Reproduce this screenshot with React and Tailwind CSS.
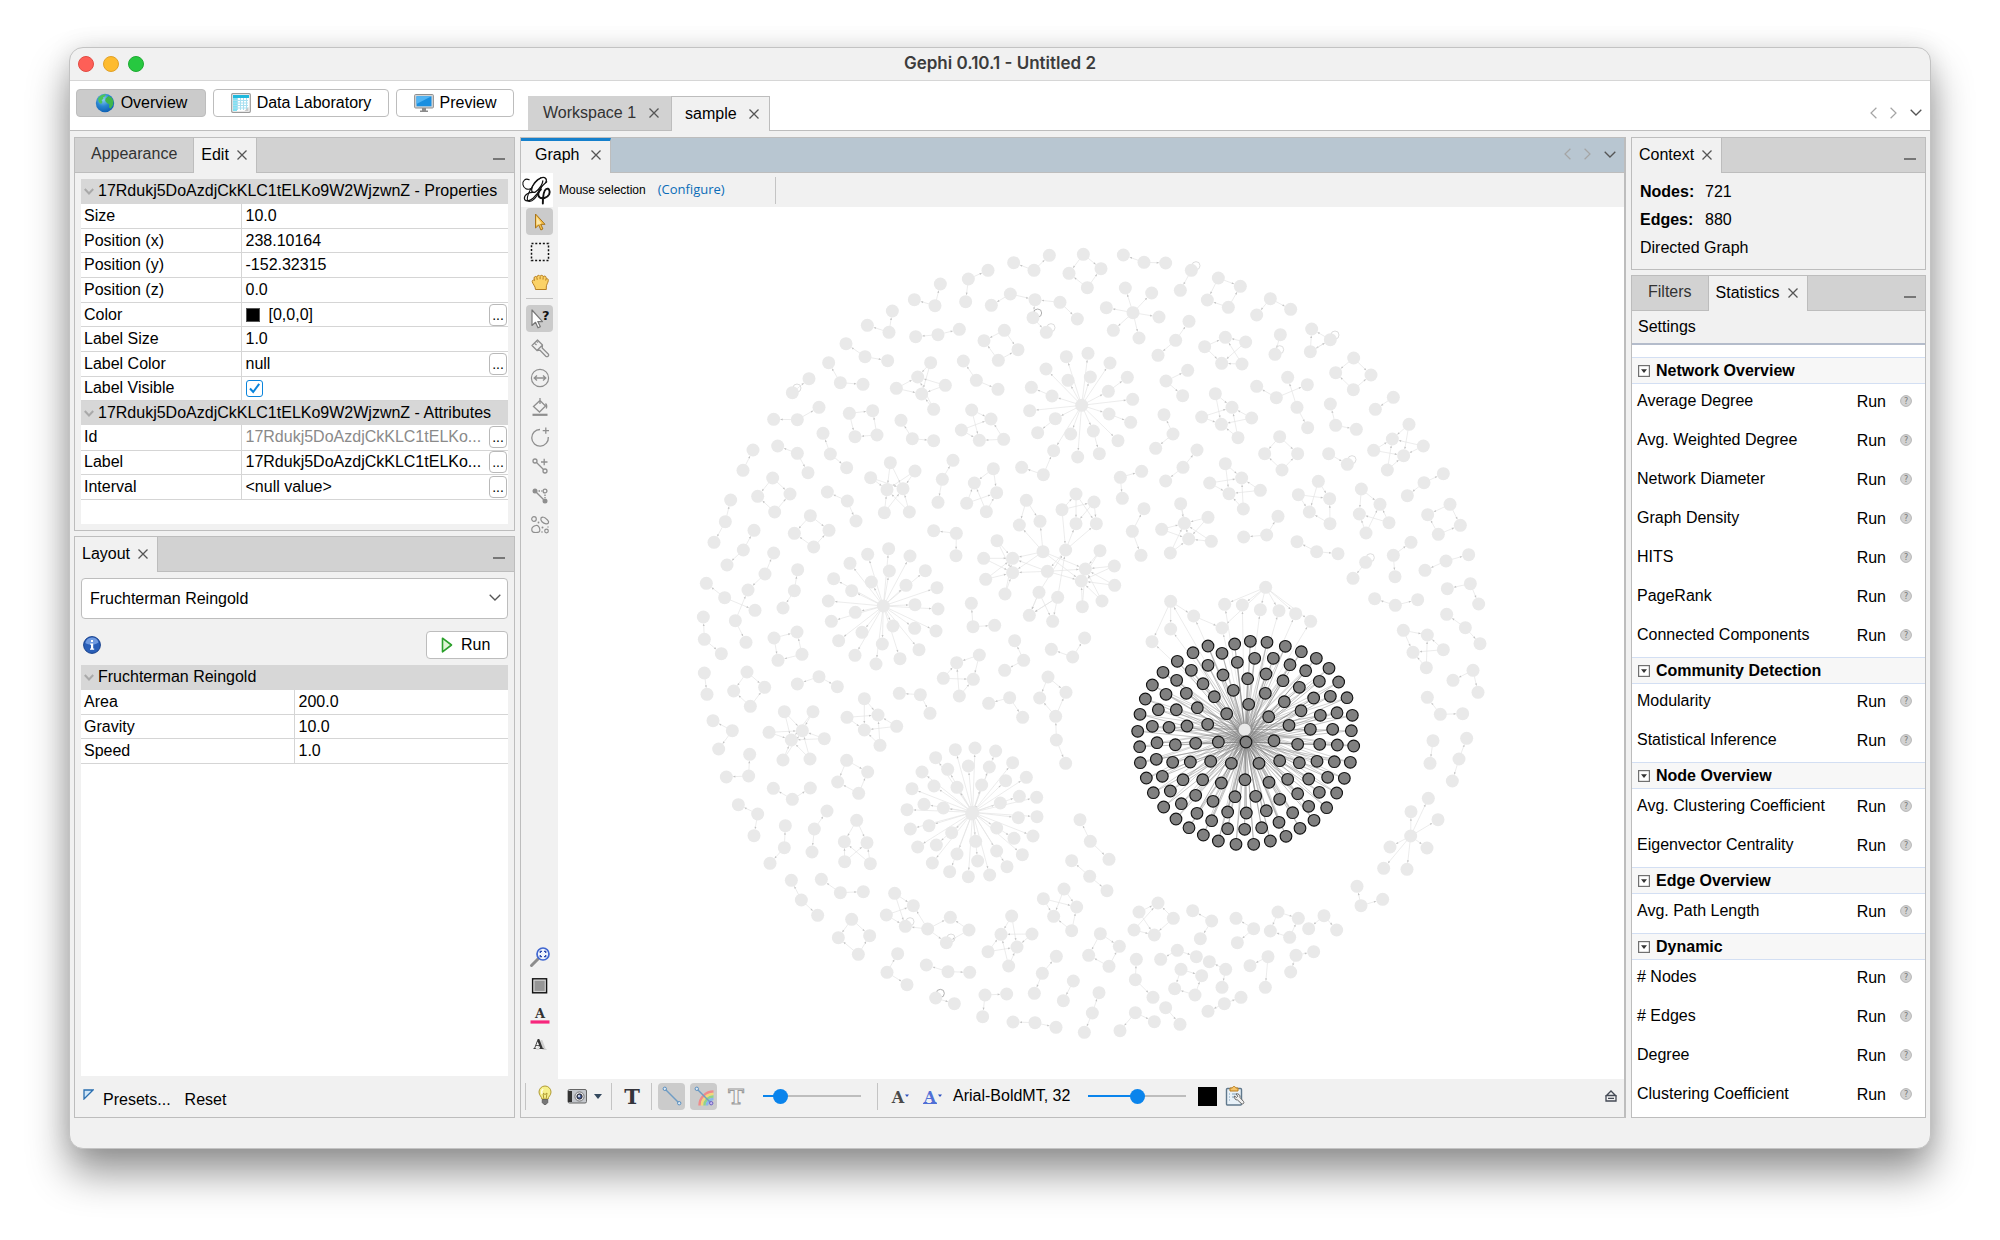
import { useState } from 'react';

/* ---------- graph data (3 units per pixel) ---------- */

// every group is a flat list of coordinates relative to the sector's origin
const sectors = [
  {
    at: [396, 69],
    pairs: [[307, 488, 357, 446], [159, 721, 189, 660]],
    chains: [
      [971, 98, 1032, 121, 1078, 76], [827, 215, 835, 147, 894, 121], [673, 209, 735, 227, 751, 162],
      [532, 286, 597, 307, 607, 243], [468, 341, 525, 380, 593, 392], [677, 320, 744, 314, 808, 298],
      [416, 398, 451, 458, 519, 463], [251, 568, 322, 569, 387, 532], [633, 571, 667, 626, 731, 632],
      [820, 393, 859, 451, 924, 478], [263, 648, 322, 670, 354, 728], [399, 610, 421, 672, 470, 713],
      [122, 810, 106, 875, 72, 937], [192, 901, 160, 960, 111, 1005], [412, 786, 472, 813, 498, 873],
      [789, 691, 757, 748, 744, 817], [731, 902, 799, 910, 798, 977], [49, 1060, 104, 1103, 195, 1141],
      [251, 969, 225, 1032, 174, 1080], [174, 1080, 136, 1172, 168, 1237], [323, 1019, 313, 1082, 279, 1134],
      [40, 1161, 43, 1228, 94, 1271], [844, 1120, 849, 1190, 914, 1186], [974, 1232, 1001, 1291, 944, 1321],
      [1084, 1258, 1148, 1281, 1184, 1224], [995, 712, 1060, 734, 1091, 662], [904, 226, 961, 192, 1035, 209],
      [1035, 209, 1110, 217, 1162, 267], [988, 885, 1009, 811, 1050, 874], [988, 885, 1059, 965, 1050, 874],
      [1018, 1156, 1047, 1087, 1088, 1174], [1018, 1156, 1103, 1102, 1088, 1174], [1127, 960, 1047, 1087, 1018, 1156],
      [1127, 960, 1103, 1102, 1018, 1156],
    ],
    rings: [
      [943, 301, 984, 359, 925, 391, 882, 332], [478, 550, 548, 542, 561, 615, 495, 620],
      [248, 744, 300, 792, 254, 846, 203, 799], [361, 857, 417, 901, 371, 951, 313, 910],
      [252, 1224, 321, 1206, 336, 1273, 264, 1291], [1180, 73, 1233, 116, 1192, 173, 1137, 130],
    ],
    webs: [
      [683, 441, 695, 492, 722, 398, 619, 475, 766, 466, 731, 538],
      [903, 567, 868, 631, 845, 540, 814, 600, 941, 628],
      [591, 779, 639, 776, 601, 698, 675, 723, 542, 743, 583, 848, 658, 846],
      [853, 759, 920, 788, 910, 716, 830, 820, 889, 845],
      [1158, 881, 1219, 881, 1158, 792, 1212, 816, 1127, 960],
      [968, 985, 968, 1028, 921, 932, 881, 985, 887, 1048, 945, 1092, 1059, 965, 1072, 1024],
      [1186, 1017, 1174, 1053, 1230, 962, 1273, 1008, 1274, 1066, 1236, 1113, 1177, 1130, 1059, 965, 1072, 1024],
    ],
    stars: [
      [1175, 526, 1129, 380, 1194, 370, 1068, 417, 1134, 451, 1201, 441, 1260, 399, 1086, 498, 1255, 484, 1019, 542,
        1096, 566, 1257, 552, 1142, 612, 1210, 603, 1163, 681, 1091, 662, 1284, 632, 1328, 508],
      [1086, 498, 1024, 472], [1255, 484, 1312, 442], [1257, 552, 1322, 577], [1096, 566, 1043, 608], [1210, 603, 1228, 671],
      [580, 1128, 533, 973, 596, 956, 660, 978, 480, 1000, 598, 1023, 706, 1022, 431, 1046, 544, 1056, 648, 1066, 741, 1073,
        485, 1082, 415, 1113, 675, 1124, 744, 1137, 496, 1147, 424, 1174, 609, 1188, 674, 1195, 738, 1203, 516, 1207,
        446, 1232, 577, 1242, 687, 1259, 495, 1276, 630, 1286, 558, 1302],
      [1116, 839, 1158, 792, 1212, 816, 1127, 960], [1127, 960, 1072, 1024],
      [1029, 263, 1035, 209, 1069, 307],
    ],
    loops: [[307, 488], [1069, 307]],
    darkLoops: [[1029, 263]],
  },
  {
    at: [1506, 69],
    pairs: [[394, 121, 361, 181], [661, 314, 645, 373], [1000, 502, 946, 538], [806, 671, 862, 703], [917, 997, 879, 1045]],
    chains: [
      [190, 75, 252, 97, 317, 99], [590, 255, 631, 206, 692, 238], [387, 274, 347, 331, 294, 376],
      [383, 421, 318, 453, 368, 497], [590, 469, 649, 503, 742, 464], [683, 442, 711, 532, 743, 593],
      [811, 522, 827, 586, 889, 598], [312, 554, 339, 612, 287, 655], [411, 660, 369, 712, 317, 753],
      [187, 805, 181, 742, 245, 724], [1150, 731, 1092, 758, 1042, 797], [252, 836, 217, 904, 243, 976],
      [551, 921, 620, 915, 654, 859], [711, 935, 770, 965, 834, 971], [1053, 937, 1000, 976, 1005, 1040],
      [1226, 974, 1158, 993, 1095, 1021], [755, 297, 811, 329, 751, 365], [755, 297, 751, 365, 811, 329],
    ],
    rings: [
      [475, 144, 541, 169, 505, 232, 442, 210], [881, 384, 933, 435, 880, 479, 827, 428],
      [659, 620, 713, 671, 666, 720, 614, 671], [1170, 823, 1201, 886, 1135, 913, 1103, 854],
    ],
    webs: [
      [496, 322, 485, 400, 434, 350, 557, 336, 546, 402],
      [516, 532, 484, 583, 466, 491, 425, 561, 575, 564, 534, 623],
      [997, 627, 1031, 677, 1047, 583, 941, 661, 1090, 648, 982, 720],
      [545, 744, 507, 791, 496, 701, 449, 759, 601, 781, 550, 837],
      [809, 806, 748, 846, 775, 754, 715, 794, 810, 881],
      [960, 823, 898, 852, 904, 777, 987, 878, 918, 909],
      [373, 880, 386, 927, 362, 821, 444, 862, 305, 898, 454, 934, 331, 969],
    ],
    stars: [[219, 248, 196, 174, 275, 189, 139, 233, 297, 261, 160, 301, 237, 324]],
    loops: [[394, 121], [645, 373], [811, 329], [862, 703], [917, 997]],
    darkLoops: [],
  },
  {
    at: [396, 1299],
    pairs: [[43, 99, 51, 163], [1150, 1023, 1120, 1082], [737, 1074, 793, 1091], [1427, 1103, 1470, 1153]],
    chains: [
      [322, 132, 387, 110, 442, 140], [69, 242, 127, 272, 86, 327], [179, 343, 176, 408, 109, 411],
      [250, 445, 307, 478, 361, 444], [145, 494, 203, 522, 192, 587], [286, 557, 283, 623, 240, 670],
      [411, 513, 373, 567, 366, 636], [304, 721, 334, 780, 383, 826], [394, 718, 451, 758, 520, 755],
      [628, 160, 691, 164, 720, 220], [896, 190, 959, 173, 998, 232], [1097, 229, 1099, 300, 1127, 370],
      [1170, 539, 1201, 604, 1257, 658], [1145, 662, 1199, 709, 1251, 752], [623, 941, 591, 997, 651, 1034],
      [709, 975, 774, 995, 839, 997], [950, 1062, 885, 1065, 878, 1130], [1099, 949, 1057, 1000, 1033, 1060],
      [969, 1146, 1035, 1148, 1098, 1162], [1227, 1058, 1207, 1119, 1183, 1177],
      [1638, 835, 1691, 866, 1642, 908], [1508, 812, 1565, 843, 1531, 896], [1856, 866, 1902, 827, 1940, 870],
      [2001, 739, 2013, 797, 2078, 778], [1339, 958, 1336, 1019, 1389, 1072], [1412, 958, 1462, 931, 1519, 950],
      [1558, 965, 1607, 988, 1596, 1042], [1680, 977, 1734, 950, 1726, 1042], [1802, 996, 1818, 946, 1871, 935],
      [1290, 1172, 1336, 1118, 1393, 1145], [1554, 1114, 1603, 1091, 1653, 1072],
    ],
    rings: [
      [171, 96, 224, 142, 181, 199, 131, 153], [485, 838, 539, 887, 505, 943, 445, 893],
      [470, 361, 533, 396, 506, 460, 443, 426], [1074, 111, 1128, 157, 1097, 229, 1049, 174],
      [713, 867, 781, 832, 837, 870, 769, 908], [1231, 881, 1288, 919, 1257, 979, 1196, 946],
      [1764, 816, 1825, 835, 1799, 892, 1741, 873], [1473, 988, 1535, 1007, 1515, 1065, 1454, 1046],
    ],
    webs: [
      [337, 272, 304, 300, 283, 215, 369, 215, 237, 277, 403, 296, 279, 360, 360, 357],
      [564, 225, 523, 270, 523, 176, 471, 232, 620, 259, 570, 316],
      [463, 605, 531, 608, 500, 541, 464, 665, 541, 671],
      [800, 68, 850, 118, 868, 45, 760, 115, 808, 168],
      [1160, 801, 1091, 829, 1060, 776, 1122, 747, 1145, 872],
      [670, 797, 646, 859, 614, 760, 589, 825, 713, 867],
      [933, 883, 981, 921, 965, 828, 1026, 882, 894, 935, 956, 978],
      [1404, 789, 1393, 885, 1347, 816, 1450, 835, 1332, 870],
    ],
    stars: [
      [848, 517, 796, 329, 855, 324, 917, 333, 737, 353, 773, 388, 835, 378, 898, 381, 968, 368, 696, 396, 947, 422,
        1009, 412, 732, 438, 801, 442, 875, 435, 666, 446, 931, 489, 988, 469, 1040, 472, 702, 493, 760, 504, 651, 509,
        985, 533, 1041, 530, 661, 567, 717, 557, 920, 564, 785, 578, 857, 604, 972, 595, 1029, 588, 683, 621, 739, 615,
        920, 633, 997, 644, 801, 642, 727, 669, 863, 663, 951, 680, 779, 695, 835, 710, 899, 705, 845, 522],
    ],
    loops: [[646, 859], [769, 908]],
    darkLoops: [[737, 1074]],
  },
  {
    at: [1566, 1089],
    pairs: [[1059, 512, 1050, 580]],
    chains: [
      [1102, 56, 1171, 41, 1196, 102], [884, 86, 946, 106, 1013, 89], [1100, 133, 1156, 173, 1200, 221],
      [1119, 331, 1179, 301, 1194, 367], [1042, 382, 1081, 433, 1148, 431], [1160, 505, 1137, 567, 1117, 633],
    ],
    rings: [],
    webs: [[1042, 195, 999, 247, 970, 181, 1090, 239, 1039, 293]],
    stars: [
      [992, 798, 1045, 685, 993, 725, 1074, 749, 930, 831, 1041, 834, 911, 895, 981, 898],
      [557, 52, 434, 103, 487, 105, 541, 119, 597, 122, 647, 131, 692, 154, 426, 174],
      [272, 94, 341, 138, 216, 215, 272, 177],
      [341, 138, 426, 174],
      [494, 479, 434, 103, 487, 105, 541, 119, 597, 122, 647, 131, 692, 154, 426, 174, 341, 138, 216, 215, 272, 177, 272, 94],
    ],
    loops: [],
    darkLoops: [],
  },
];

// highlighted neighbourhood of the hovered node
const hub = [498, 516];
const selected = [
  511, 214, 561, 217, 616, 229, 664, 245, 709, 265, 747, 295, 776, 336, 801, 383, 817, 436, 814, 482, 821, 528, 811, 577,
  793, 625, 770, 669, 740, 713, 702, 751, 660, 775, 618, 799, 571, 813, 521, 823, 468, 823, 415, 813, 370, 795, 327, 773,
  288, 747, 251, 711, 220, 668, 199, 624, 181, 578, 179, 530, 173, 484, 180, 433, 196, 387, 217, 345, 249, 307, 292, 274,
  339, 248, 384, 228, 464, 222, 426, 250, 472, 277, 524, 265, 580, 265, 630, 284, 677, 302, 718, 334, 751, 379, 771, 428,
  758, 478, 772, 525, 763, 575, 743, 622, 718, 667, 686, 709, 638, 728, 597, 757, 545, 773, 494, 778, 443, 776, 395, 752,
  351, 730, 304, 701, 271, 663, 247, 619, 229, 568, 231, 518, 217, 469, 235, 419, 258, 373, 290, 331, 334, 301, 384, 286,
  429, 315, 503, 326, 558, 312, 609, 332, 658, 352, 701, 384, 721, 436, 691, 478, 719, 523, 711, 574, 686, 627, 653, 671,
  599, 688, 559, 722, 499, 729, 443, 726, 399, 694, 347, 676, 309, 629, 278, 577, 286, 524, 267, 472, 289, 419, 319, 370,
  369, 341, 403, 380, 460, 361, 556, 370, 613, 395, 663, 422, 627, 466, 653, 523, 658, 578, 623, 628, 567, 637, 527, 679,
  465, 680, 424, 639, 368, 629, 331, 576, 347, 520, 321, 468, 352, 413, 440, 431, 506, 403, 566, 440, 582, 512, 599, 572,
  537, 580, 495, 629, 454, 580, 392, 574, 415, 516, 383, 463,
];

const toPoints = (flat) => {
  const out = [];
  for (let i = 0; i < flat.length; i += 2) out.push([flat[i], flat[i + 1]]);
  return out;
};

function buildSector({ pairs, chains, rings, webs, stars }) {
  const nodes = new Map();
  const edges = [];
  const add = (list) => list.forEach((p) => nodes.set(p.join(), p));
  [...pairs, ...stars].forEach((flat) => {
    const [from, ...rest] = toPoints(flat);
    add([from, ...rest]);
    rest.forEach((to) => edges.push([from, to]));
  });
  chains.forEach((flat) => {
    const [a, mid, b] = toPoints(flat);
    add([a, mid, b]);
    edges.push([mid, a], [mid, b]);
  });
  rings.forEach((flat) => {
    const [a, b, c, d] = toPoints(flat);
    add([a, b, c, d]);
    edges.push([a, b], [a, d], [c, b], [c, d]);
  });
  webs.forEach((flat) => {
    const [h1, h2, ...leaves] = toPoints(flat);
    add([h1, h2, ...leaves]);
    leaves.forEach((leaf) => edges.push([leaf, h1], [leaf, h2]));
  });
  return { nodes: [...nodes.values()], edges };
}

function Edge({ from, to }) {
  const dx = to[0] - from[0];
  const dy = to[1] - from[1];
  const len = Math.hypot(dx, dy) || 1;
  const ux = dx / len;
  const uy = dy / len;
  const tx = to[0] - ux * 20;
  const ty = to[1] - uy * 20;
  const bx = tx - ux * 7;
  const by = ty - uy * 7;
  return (
    <>
      <path d={`M${from[0]} ${from[1]}L${tx} ${ty}`} stroke="#e2e2e2" strokeWidth="2" />
      <path d={`M${tx} ${ty}L${bx - uy * 3} ${by + ux * 3}L${bx + uy * 3} ${by - ux * 3}Z`} fill="#c4c4c4" />
    </>
  );
}

function GraphCanvas() {
  const ring = toPoints(selected);
  return (
    <svg viewBox="0 0 3198 2616" className="absolute inset-0 h-full w-full" role="img" aria-label="Graph">
      {sectors.map((sector) => {
        const { nodes, edges } = buildSector(sector);
        return (
          <g key={sector.at.join()} transform={`translate(${sector.at[0]} ${sector.at[1]})`} fill="none">
            {edges.map(([from, to], i) => <Edge key={i} from={from} to={to} />)}
            {sector.loops.map(([x, y]) => <circle key={`${x},${y}`} cx={x + 14} cy={y - 14} r="12" stroke="#dedede" strokeWidth="3" />)}
            {sector.darkLoops.map(([x, y]) => <circle key={`${x},${y}`} cx={x + 14} cy={y - 14} r="12" stroke="#b0b0b0" strokeWidth="3" />)}
            {nodes.map(([x, y]) => <circle key={`${x},${y}`} cx={x} cy={y} r="19.5" fill="#e9e9e9" />)}
          </g>
        );
      })}
      <g transform="translate(1566 1089)">
        {ring.map(([x, y]) => (
          <g key={`${x},${y}`} stroke="#808080" strokeWidth="2">
            <path d={`M${hub[0]} ${hub[1]}L${x} ${y}`} opacity="0.7" />
            <path d={`M494 479L${x} ${y}`} opacity="0.5" />
          </g>
        ))}
        <circle cx="494" cy="479" r="19.5" fill="#e9e9e9" stroke="#8a8a8a" strokeWidth="2" />
        {[...ring, hub].map(([x, y]) => (
          <circle key={`${x},${y}`} cx={x} cy={y} r="17.5" fill="#808080" stroke="#141414" strokeWidth="3.5" />
        ))}
      </g>
    </svg>
  );
}

/* ---------- small icons ---------- */

const CloseIcon = () => (
  <svg viewBox="0 0 10 10" className="size-2.5" fill="none" stroke="#555" strokeWidth="1.3"><path d="M.5.5l9 9M9.5.5l-9 9" /></svg>
);

const ChevronDown = ({ className = 'w-3' }) => (
  <svg viewBox="0 0 12 7" className={className} fill="none" stroke="#555" strokeWidth="1.3"><path d="M.7.7L6 6 11.3.7" /></svg>
);

const ScrollArrows = () => (
  <div className="flex items-center gap-[13px]">
    <button aria-label="Previous tab"><svg viewBox="0 0 7 12" className="w-[7px]" fill="none" stroke="#a5a5a5" strokeWidth="1.2"><path d="M6.4.7L1 6l5.4 5.3" /></svg></button>
    <button aria-label="Next tab"><svg viewBox="0 0 7 12" className="w-[7px]" fill="none" stroke="#a5a5a5" strokeWidth="1.2"><path d="M.6.7L6 6 .6 11.3" /></svg></button>
    <button aria-label="Show tabs"><ChevronDown /></button>
  </div>
);

const GlobeIcon = () => (
  <svg viewBox="0 0 20 20" className="size-5">
    <defs>
      <radialGradient id="sea" cx=".4" cy=".3" r=".75"><stop offset="0" stopColor="#8fd0f5" /><stop offset=".5" stopColor="#2a86d0" /><stop offset="1" stopColor="#0b5cb0" /></radialGradient>
    </defs>
    <circle cx="10" cy="10" r="9.2" fill="url(#sea)" />
    <path d="M3 5.500C5 2 8.500 1 11 1.200l-1 2-2 1.300.5 1.500-2 1 1 2-1.500 2L3.800 9z" fill="#4cc45a" />
    <path d="M10.500 5.500l3-2.500 3 1.500 2 3.500-.5 4-2.200 3.500-1.800-1 .3-3-2.300-1.500-1.800-2z" fill="#3fb64c" />
  </svg>
);

const TableIcon = () => (
  <svg viewBox="0 0 20 20" className="size-5">
    <rect x=".7" y=".7" width="18.600" height="18.600" rx="1" fill="#fff" stroke="#9a9a9a" strokeWidth="1.2" />
    <rect x="2" y="2" width="16" height="3" fill="#1fb8dc" />
    <rect x="2" y="5" width="4" height="13" fill="#7fe0f2" />
    <path d="M2 7.500h15M2 10h15M2 12.500h15M2 15h15M6.500 5v12M9.500 5v12M12.500 5v12M15.500 5v12" stroke="#a9dff0" strokeWidth="1" />
    <path d="M17.500 14v4h-4z" fill="#c9c9c9" />
  </svg>
);

const MonitorIcon = () => (
  <svg viewBox="0 0 20 20" className="size-5">
    <rect x=".6" y="1.500" width="18.800" height="13.500" rx="1" fill="#d6d6d6" stroke="#8f8f8f" />
    <rect x="2.500" y="3.300" width="15" height="10" fill="#1a8fe0" />
    <path d="M2.500 3.300h15L2.500 11z" fill="#52b4f2" />
    <path d="M8 15h4v2.500h2v1.500H6v-1.500h2z" fill="#8b8b8b" />
  </svg>
);

const GephiLogo = () => (
  <svg viewBox="0 0 32 35" className="h-[34px] w-8 bg-white" fill="none" stroke="#111" strokeLinecap="round">
    <path d="M25 10C27 6 24 3.500 20 5 15 7 11 12 10.500 17c-.3 3 2 4 4.500 2 4-3 7-8 7-11" strokeWidth="1.300" />
    <path d="M8 7C4 5 .8 8 1.500 12c.8 4 4.500 6 8.500 4" strokeWidth="1.100" />
    <path d="M20 5c-7 4-14 16-14 22 0 3 4 3 7 0 4-4 6-9 8-13" strokeWidth="1.100" />
    <path d="M13 20C8 19.500 3 22 3 26c0 3.500 5 3.500 9 0 4-3.500 6-7 8-11 1-2 4-4 6-6" strokeWidth="1.200" />
    <path d="M20 17c-3 2-3.500 6-1.500 8 2.500 2 8 1 10-3 1.500-3.500-.5-7-3-5.500-2.500 1.500-3.500 8-3.500 15" strokeWidth="2" />
  </svg>
);

const toolClass = 'flex size-[27px] items-center justify-center rounded';

function Tool({ label, active, children }) {
  return (
    <button aria-label={label} title={label} className={active ? `${toolClass} bg-[#cbcbcb]` : toolClass}>
      <svg viewBox="0 0 20 20" className="size-5 overflow-visible" fill="none">{children}</svg>
    </button>
  );
}

const VSep = () => <div className="h-[27px] w-px shrink-0 bg-[#c4c4c4]" />;

/* ---------- panels ---------- */

function Tab({ title, active, accent }) {
  if (!active) {
    return <button className="border-r border-b border-[#bdbdbd] px-4 pb-0.5 text-[#333]">{title}</button>;
  }
  const base = 'flex items-center border-r border-[#bdbdbd] bg-[#f1f1f1]';
  return (
    <div className={accent ? `${base} gap-3 border-t-3 border-t-[#1580cc] pr-[9px] pb-[5px] pl-[14px]` : `${base} gap-2 pr-[9px] pb-0.5 pl-[7px]`}>
      <button>{title}</button>
      <button aria-label={`Close ${title}`}><CloseIcon /></button>
    </div>
  );
}

function TabBar({ children }) {
  return (
    <div className="flex h-[35px] shrink-0 bg-[#d2d2d2]">
      {children}
      <div className="flex flex-1 items-end justify-end border-b border-[#bdbdbd] pr-[9px] pb-3">
        <button aria-label="Minimize" className="h-0.5 w-3 bg-[#777]" />
      </div>
    </div>
  );
}

const panelClass = 'flex flex-col border border-[#bdbdbd] bg-[#f1f1f1]';

function PropertyHeader({ children }) {
  return (
    <tr className="h-6 bg-[#d7d7d7]">
      <th colSpan={2} className="p-0 text-left font-normal whitespace-nowrap">
        <span className="flex items-center gap-1 pl-[3px]">
          <svg viewBox="0 0 10 7" className="w-2.5" fill="none" stroke="#a9a9a9" strokeWidth="2"><path d="M.8 1L5 5.500 9.200 1" /></svg>
          {children}
        </span>
      </th>
    </tr>
  );
}

function PropertyRow({ name, more, muted, children }) {
  return (
    <tr className="h-6 border-b border-[#d5d5d5]">
      <th scope="row" className="border-r border-[#d5d5d5] p-0 pl-[3px] text-left font-normal whitespace-nowrap">{name}</th>
      <td className="p-0 pl-1">
        <div className="flex items-center justify-between">
          <span className={muted ? 'whitespace-nowrap text-[#8a8a8a]' : 'whitespace-nowrap'}>{children}</span>
          {more && <button aria-label={`Edit ${name}`} className="mr-px h-[22px] w-[18px] shrink-0 rounded border border-[#b9b9b9] bg-white text-sm leading-5">...</button>}
        </div>
      </td>
    </tr>
  );
}

function EditPanel() {
  const [visible, setVisible] = useState(true);
  const id = '17Rdukj5DoAzdjCkKLC1tELKo9W2WjzwnZ';
  const shortId = `${id.slice(0, 25)}...`;
  return (
    <section className={`${panelClass} h-[394px]`}>
      <TabBar>
        <Tab title="Appearance" />
        <Tab title="Edit" active />
      </TabBar>
      <div className="m-1.5 flex-1 bg-white">
        <table className="h-[321px] w-full table-fixed border-collapse leading-5">
          <colgroup><col className="w-[160px]" /><col /></colgroup>
          <tbody>
            <PropertyHeader>{id} - Properties</PropertyHeader>
            <PropertyRow name="Size">10.0</PropertyRow>
            <PropertyRow name="Position (x)">238.10164</PropertyRow>
            <PropertyRow name="Position (y)">-152.32315</PropertyRow>
            <PropertyRow name="Position (z)">0.0</PropertyRow>
            <PropertyRow name="Color" more>
              <span className="flex items-center gap-[9px]"><span className="size-3.5 border border-[#555] bg-black" />[0,0,0]</span>
            </PropertyRow>
            <PropertyRow name="Label Size">1.0</PropertyRow>
            <PropertyRow name="Label Color" more>null</PropertyRow>
            <PropertyRow name="Label Visible">
              <label className="relative block size-[17px]">
                <input
                  type="checkbox"
                  aria-label="Label Visible"
                  checked={visible}
                  onChange={(e) => setVisible(e.target.checked)}
                  className="block size-[17px] appearance-none rounded-[3px] border border-[#0a84dc] bg-white"
                />
                {visible && <svg viewBox="0 0 17 17" className="pointer-events-none absolute inset-0 size-[17px]" fill="none" stroke="#0a84dc" strokeWidth="2"><path d="M4 8.500l3.200 3.500 6-8.200" /></svg>}
              </label>
            </PropertyRow>
            <PropertyHeader>{id} - Attributes</PropertyHeader>
            <PropertyRow name="Id" more muted>{shortId}</PropertyRow>
            <PropertyRow name="Label" more>{shortId}</PropertyRow>
            <PropertyRow name="Interval" more>&lt;null value&gt;</PropertyRow>
          </tbody>
        </table>
      </div>
    </section>
  );
}

function LayoutPanel() {
  return (
    <section className={`${panelClass} flex-1`}>
      <TabBar><Tab title="Layout" active /></TabBar>
      <div className="flex flex-1 flex-col px-1.5 pt-1.5">
        <div className="relative">
          <select aria-label="Layout algorithm" className="h-[41px] w-full appearance-none rounded border border-[#bdbdbd] bg-white px-2">
            <option>Fruchterman Reingold</option>
          </select>
          <ChevronDown className="pointer-events-none absolute top-4 right-[7px] w-3" />
        </div>
        <div className="mt-3 flex items-center justify-between">
          <button aria-label="Info" className="ml-0.5">
            <svg viewBox="0 0 18 18" className="size-[18px]">
              <circle cx="9" cy="9" r="8.400" fill="#2a5fb8" stroke="#17408c" />
              <path d="M9 1.500a7 7 0 0 1 6.500 5C11 9.500 6 9 2.300 7A7 7 0 0 1 9 1.500z" fill="#6f9ae0" />
              <path d="M7.200 7.500h3v5h1v1.300H7v-1.300h1V8.800h-.8zM8 4h2v2H8z" fill="#fff" />
            </svg>
          </button>
          <button className="flex h-7 w-[82px] items-center gap-2 rounded border border-[#bdbdbd] bg-white pl-3.5">
            <svg viewBox="0 0 12 16" className="w-3"><path d="M1.500 1.200L10.500 8l-9 6.800z" fill="#dff5d6" stroke="#2ba02b" strokeWidth="1.600" strokeLinejoin="round" /></svg>
            Run
          </button>
        </div>
        <div className="mt-1.5 flex-1 bg-white">
          <table className="h-[99px] w-full table-fixed border-collapse leading-5">
            <colgroup><col className="w-[213px]" /><col /></colgroup>
            <tbody>
              <PropertyHeader>Fruchterman Reingold</PropertyHeader>
              <PropertyRow name="Area">200.0</PropertyRow>
              <PropertyRow name="Gravity">10.0</PropertyRow>
              <PropertyRow name="Speed">1.0</PropertyRow>
            </tbody>
          </table>
        </div>
        <div className="flex h-[41px] items-center gap-3.5 pt-1.5 pl-0.5">
          <button className="flex gap-[9px]">
            <svg viewBox="0 0 11 11" className="mt-px size-[11px]"><path d="M1 1h9L1 10z" fill="#cfe6f8" stroke="#2a6fb0" strokeWidth="1.300" /></svg>
            Presets...
          </button>
          <button>Reset</button>
        </div>
      </div>
    </section>
  );
}

const ink = '#8f8f8f';

function SideTools() {
  return (
    <div className="flex w-[37px] shrink-0 flex-col items-center justify-between bg-[#f1f1f1] pt-px pb-[21px]">
      <div className="flex flex-col items-center">
        <div className="flex flex-col gap-[3px]">
          <Tool label="Direct selection" active>
            <path d="M5.500 2v14l3.200-3 2.200 5 2-1-2.100-4.700h4.200z" fill="#f8c24a" stroke="#a8741a" strokeLinejoin="round" />
            <path d="M6.500 4.500v8.500l5-1.500z" fill="#fbe6a8" />
          </Tool>
          <Tool label="Rectangle selection">
            <rect x="1.500" y="1.500" width="17" height="17" stroke="#111" strokeWidth="1.500" strokeDasharray="2 1.780" />
          </Tool>
          <Tool label="Drag">
            <path d="M5.500 17.500C5.500 14 2.500 12 2.200 9.500 2.200 8 3.500 7.500 4.500 8.500L4 6C4.300 4.300 6 4 6.800 5.200 7.200 3 9.200 2.800 10 4.300c1-1.500 2.800-1.200 3.200.3 1.200-1 2.600-.6 2.900.8.1.6 0 1 0 1.400 1.200-.5 2.400.2 2.200 1.700-.3 2.500-2 4-2 6.500V17.500z" fill="#fbd267" stroke="#b77f22" strokeLinejoin="round" />
            <path d="M6.900 5.500l.3 2.300M10.100 4.800v2.400M13.200 5.200l-.2 2.400M16 7l-.3 1.500" stroke="#b77f22" />
          </Tool>
        </div>
        <div className="mt-[3px] mb-1.5 h-px w-[27px] bg-[#c4c4c4]" />
        <div className="flex h-[234px] flex-col justify-between">
          <Tool label="Edit" active>
            <path d="M2 1v15.500l3.500-3.200 2.500 5.500 2.300-1.200-2.500-5h4.700z" fill="#fff" stroke="#777" strokeWidth="1.200" strokeLinejoin="round" />
            <text x="12" y="11" fontFamily="DejaVu Sans" fontWeight="bold" fontSize="13" fill="#111">?</text>
          </Tool>
          <Tool label="Painter">
            <path d="M2 7.500L7.500 2l5 5-5.500 5.500zM4.500 5l2 2M6.500 3l1.500 1.500M12.500 7l-.3 3 6 6c1.500 1.500-1 3.500-2.400 2.200l-5.800-6-3 .3" stroke={ink} strokeWidth="1.300" strokeLinejoin="round" />
          </Tool>
          <Tool label="Sizer">
            <circle cx="10" cy="10" r="8.600" stroke={ink} strokeWidth="1.200" />
            <path d="M4 10h12M7 7.500L4.200 10 7 12.500M13 7.500l2.800 2.500-2.800 2.500" stroke={ink} strokeWidth="1.300" />
          </Tool>
          <Tool label="Brush">
            <path d="M10 1v6M10 3.500l5.500 5.500L9.500 15 3.500 9.500zM15.500 6.500c1.200 1 1.500 3 .8 5" stroke={ink} strokeWidth="1.300" />
            <path d="M2.500 17.800h15" stroke={ink} strokeWidth="2.200" />
          </Tool>
          <Tool label="Node pencil">
            <path d="M10 2.500a8.300 8.300 0 1 0 8.300 7.500M12.700 3.700h6.300M15.800.6v6.200" stroke={ink} strokeWidth="1.300" />
          </Tool>
          <Tool label="Edge pencil">
            <circle cx="5" cy="5" r="2" stroke={ink} strokeWidth="1.300" />
            <circle cx="15" cy="15" r="2" stroke={ink} strokeWidth="1.300" />
            <path d="M6.500 6.500l7 7M11 6h6.500M14.200 2.800v6.500" stroke={ink} strokeWidth="1.300" />
          </Tool>
          <Tool label="Shortest path">
            <circle cx="5" cy="5" r="2.500" fill={ink} />
            <circle cx="15" cy="15" r="2.500" fill={ink} />
            <circle cx="15" cy="5" r="1.900" stroke={ink} strokeWidth="1.300" />
            <path d="M6.500 6.500l7 7M8.500 5h1.500M11.300 5h1M15 8.500V10M15 11v1" stroke={ink} strokeWidth="1.400" />
          </Tool>
          <Tool label="Heat map">
            <circle cx="4" cy="4" r="2.300" stroke={ink} strokeWidth="1.200" />
            <path d="M11 3c2-2 4-.5 6.500 2s.5 4-1.500 3.800C13 8.500 10 5.500 11 3zM6 10.500c2-.5 3.500 1.500 3.800 4s-1 3-4 3-4.300-1-4-3.500 2-3 4.200-3.500z" stroke={ink} strokeWidth="1.200" />
            <circle cx="16.500" cy="16" r="1.800" stroke={ink} strokeWidth="1.200" />
            <circle cx="8.500" cy="7.500" r=".9" fill={ink} /><circle cx="12.500" cy="12.500" r="1" fill={ink} /><circle cx="18" cy="12" r=".7" fill={ink} /><circle cx="12" cy="17" r=".8" fill={ink} />
          </Tool>
        </div>
      </div>
      <div className="flex h-[115px] flex-col justify-between">
        <Tool label="Center on graph">
          <path d="M8 12l-6.500 6.500" stroke="#8c8c8c" strokeWidth="3" strokeLinecap="round" />
          <circle cx="13" cy="7" r="6" fill="#eef3fd" stroke="#3f66d0" strokeWidth="1.700" />
          <path d="M10.300 6V4.300H12M14 4.300h1.700V6M15.700 8v1.700H14M12 9.700h-1.700V8" stroke="#2a49b0" strokeWidth="1.300" />
        </Tool>
        <Tool label="Reset colors">
          <rect x="2.600" y="2.800" width="14" height="14" fill="#969696" stroke="#111" strokeWidth="1.400" />
          <rect x="4" y="4.200" width="11.200" height="11.200" stroke="#d8d8d8" />
        </Tool>
        <Tool label="Reset label colors">
          <text x="10" y="13" textAnchor="middle" fontFamily="DejaVu Serif" fontWeight="bold" fontSize="13" fill="#333">A</text>
          <path d="M.5 17h19" stroke="#f7267c" strokeWidth="3.200" />
        </Tool>
        <Tool label="Reset label visible">
          <text x="8.500" y="14.500" textAnchor="middle" fontFamily="DejaVu Serif" fontWeight="bold" fontSize="13" fill="#333" className="drop-shadow-[3px_1px_0_#cfcfcf]">A</text>
        </Tool>
      </div>
    </div>
  );
}

const sliderClass = 'h-4 w-[98px] appearance-none bg-[length:100%_2px] bg-center bg-no-repeat [&::-webkit-slider-thumb]:size-[15px] [&::-webkit-slider-thumb]:appearance-none [&::-webkit-slider-thumb]:rounded-full [&::-webkit-slider-thumb]:bg-[#0a84ec]';

function BottomBar() {
  return (
    <div className="flex h-[38px] shrink-0 items-center bg-[#f1f1f1] pr-[7px] pb-1 pl-1">
      <VSep />
      <div className="ml-[5px]"><Tool label="Show hovered">
        <path d="M6.800 13C6.800 10.500 4 9.500 4 6a6 6 0 0 1 12 0c0 3.500-2.800 4.500-2.800 7z" fill="#f6f08a" stroke="#b09a32" />
        <path d="M8.800 12.500L8 7l2 1.500L12 7l-.8 5.500" stroke="#b09a32" />
        <path d="M7.200 13.500h5.600v3L11 18.500H9l-1.800-2z" fill="#777" stroke="#444" strokeWidth=".6" />
        <path d="M7.200 8a4 4 0 0 1 1-5" stroke="#fffde0" strokeWidth="1.500" />
      </Tool></div>
      <div className="ml-[5px]"><Tool label="Screenshot">
        <rect x="1" y="3.500" width="18.500" height="13.500" rx="1.500" fill="#c4c7cc" stroke="#666" />
        <rect x="1" y="5" width="4" height="11" fill="#333" />
        <circle cx="12.500" cy="10.500" r="4.600" fill="#e8e8ee" stroke="#777" />
        <circle cx="12.500" cy="10.500" r="2.600" fill="#4a5f9a" stroke="#222" />
        <circle cx="12" cy="10" r=".9" fill="#fff" />
      </Tool></div>
      <button aria-label="Screenshot options" className="mr-[9px] ml-1"><svg viewBox="0 0 8 5" className="w-2"><path d="M0 0h8L4 5z" fill="#34495e" /></svg></button>
      <VSep />
      <div className="mx-[6px]"><Tool label="Show node labels">
        <text x="10" y="17.500" textAnchor="middle" fontFamily="DejaVu Serif" fontWeight="bold" fontSize="21" fill="#34343a">T</text>
      </Tool></div>
      <VSep />
      <div className="ml-1.5 flex gap-[5px]">
        <Tool label="Show edges" active>
          <path d="M3 3l14 14" stroke="#6f9cc4" strokeWidth="1.400" />
          <circle cx="2.800" cy="2.800" r="1.700" fill="#dbe9f5" stroke="#5a8fc0" /><circle cx="17.200" cy="17.200" r="1.700" fill="#dbe9f5" stroke="#5a8fc0" />
        </Tool>
        <Tool label="Edges have source node color" active>
          <path d="M5.500 19.500A14 14 0 0 1 19.500 5.500" stroke="#f08a8a" strokeWidth="2.500" />
          <path d="M8 19.500A11.500 11.500 0 0 1 19.500 8" stroke="#f3d77a" strokeWidth="2.500" />
          <path d="M10.500 19.500a9 9 0 0 1 9-9" stroke="#8fd48a" strokeWidth="2.500" />
          <path d="M13 19.500a6.500 6.500 0 0 1 6.500-6.500" stroke="#8ab6ee" strokeWidth="2.500" />
          <path d="M3 3l14 14" stroke="#6f9cc4" strokeWidth="1.400" />
          <circle cx="2.800" cy="2.800" r="1.700" fill="#dbe9f5" stroke="#5a8fc0" /><circle cx="17.200" cy="17.200" r="1.700" fill="#c9b8ee" stroke="#6a5fc0" />
        </Tool>
        <Tool label="Show edge labels">
          <text x="10" y="17.500" textAnchor="middle" fontFamily="DejaVu Serif" fontWeight="bold" fontSize="21" fill="#f4f4f4" stroke="#9a9a9a">T</text>
        </Tool>
      </div>
      <input type="range" aria-label="Edge weight scale" defaultValue="12" className={`${sliderClass} mr-4 ml-3.5 bg-[linear-gradient(to_right,#0a84ec_18%,#bdbdbd_18%)]`} />
      <VSep />
      <div className="ml-1.5 flex gap-[5px]">
        <Tool label="Size mode">
          <text x="10" y="17" textAnchor="middle" fontFamily="DejaVu Serif" fontWeight="bold" fontSize="16" fill="#4a4a4a">A</text>
          <path d="M17 8.500h4l-2 2.500z" fill="#2a4fc0" />
        </Tool>
        <Tool label="Color mode">
          <text x="10" y="17" textAnchor="middle" fontFamily="DejaVu Serif" fontWeight="bold" fontSize="16" fill="#4f6fd6">A</text>
          <path d="M3 17.500h14" stroke="#4f6fd6" /><path d="M18 8.500h4l-2 2.500z" fill="#2a4fc0" />
        </Tool>
      </div>
      <button className="ml-2.5">Arial-BoldMT, 32</button>
      <input type="range" aria-label="Font size scale" defaultValue="50" className={`${sliderClass} ml-[18px] bg-[linear-gradient(to_right,#0a84ec_50%,#bdbdbd_50%)]`} />
      <button aria-label="Default color" className="ml-3 size-[19px] bg-black" />
      <div className="ml-1"><Tool label="Attributes">
        <rect x="1.500" y="2.500" width="15" height="16.500" rx="1" fill="#e8f1f8" stroke="#60788c" strokeWidth="1.400" />
        <path d="M5 5V2h2.200c.5-2 3.200-2 3.700 0H13v3z" fill="#f5c46a" stroke="#b97c1c" />
        <path d="M4 8h1M7 8h5M4 11h1M7 11h3M4 14h1" stroke="#7fa0ba" />
        <path d="M11 8a3 3 0 0 1 4 3.500l3.500 4c1.200 1.500-.6 3.300-2.200 2L12.500 14A3 3 0 0 1 9.500 10l2 1.500 1.300-1.300z" fill="#eee" stroke="#666" />
      </Tool></div>
      <button aria-label="Expand" className="ml-auto">
        <svg viewBox="0 0 12 12" className="size-3" fill="none" stroke="#444a55" strokeWidth="1.300"><path d="M1.500 5.500L6 1l4.500 4.500zM1 5.700h10v5.300H1zM3 8.300h6" /></svg>
      </button>
    </div>
  );
}

function GraphPanel() {
  return (
    <main className="flex min-w-0 flex-1 flex-col border border-r-2 border-[#bdbdbd] bg-[#f1f1f1]">
      <div className="flex h-[35px] shrink-0 bg-[#b8c6d1]">
        <Tab title="Graph" active accent />
        <div className="flex flex-1 items-center justify-end border-b border-[#bdbdbd] pr-2 pb-0.5"><ScrollArrows /></div>
      </div>
      <div className="flex h-[34px] shrink-0 items-center">
        <GephiLogo />
        <span className="ml-1.5 text-xs">Mouse selection</span>
        <a href="#configure" className="ml-3 font-['Open_Sans',sans-serif] text-[13px] text-[#0a6cb8]">(Configure)</a>
        <div className="ml-[50px]"><VSep /></div>
      </div>
      <div className="flex flex-1">
        <SideTools />
        <div className="relative flex-1 bg-white"><GraphCanvas /></div>
      </div>
      <BottomBar />
    </main>
  );
}

const statistics = [
  ['Network Overview', ['Average Degree', 'Avg. Weighted Degree', 'Network Diameter', 'Graph Density', 'HITS', 'PageRank', 'Connected Components']],
  ['Community Detection', ['Modularity', 'Statistical Inference']],
  ['Node Overview', ['Avg. Clustering Coefficient', 'Eigenvector Centrality']],
  ['Edge Overview', ['Avg. Path Length']],
  ['Dynamic', ['# Nodes', '# Edges', 'Degree', 'Clustering Coefficient']],
];

function StatisticsPanel() {
  return (
    <section className={`${panelClass} flex-1`}>
      <TabBar>
        <Tab title="Filters" />
        <Tab title="Statistics" active />
      </TabBar>
      <div className="flex h-[34px] items-center border-b-2 border-[#b4bccb] pl-1.5">Settings</div>
      <div className="flex-1 bg-white pt-3">
        {statistics.map(([group, items]) => (
          <div key={group}>
            <h3 className="flex h-[27px] items-center gap-1.5 border-y border-[#d3dff3] bg-[#f7f7f7] pl-1.5 font-bold">
              <svg viewBox="0 0 12 12" className="size-3"><rect x=".6" y=".6" width="10.800" height="10.800" fill="#fff" stroke="#707070" strokeWidth="1.200" /><path d="M3 4.300h6L6 8z" fill="#333" /></svg>
              {group}
            </h3>
            <ul>
              {items.map((item) => (
                <li key={item} className="flex h-[39px] items-center pr-[13px] pb-1.5 pl-[5px]">
                  <span className="flex-1 whitespace-nowrap">{item}</span>
                  <button className="pt-0.5" aria-label={`Run ${item}`}>Run</button>
                  <button className="ml-[14px]" aria-label={`About ${item}`}>
                    <svg viewBox="0 0 12 12" className="size-3">
                      <circle cx="6" cy="6" r="5.400" fill="#d2d2d2" stroke="#b4b4b4" />
                      <text x="6" y="9" textAnchor="middle" fontFamily="DejaVu Sans" fontSize="8" fill="#777">?</text>
                    </svg>
                  </button>
                </li>
              ))}
            </ul>
          </div>
        ))}
      </div>
    </section>
  );
}

function ContextPanel() {
  return (
    <section className={`${panelClass} h-[133px]`}>
      <TabBar><Tab title="Context" active /></TabBar>
      <dl className="grid grid-cols-[65px_1fr] pt-[5px] pl-2 leading-7">
        <dt className="font-bold">Nodes:</dt><dd>721</dd>
        <dt className="font-bold">Edges:</dt><dd>880</dd>
      </dl>
      <p className="pl-2 leading-7">Directed Graph</p>
    </section>
  );
}

const modeClass = 'flex h-7 items-center justify-center gap-1.5 rounded border border-[#bdbdbd]';

export default function App() {
  return (
    <div className="flex min-h-screen flex-col bg-white px-[69px] pt-[47px] pb-[91px] font-['Liberation_Sans',Arial,sans-serif] text-base text-black">
      <div className="flex flex-1 flex-col overflow-hidden rounded-[14px] border border-[#c3c3c3] bg-[#f1f1f1] shadow-[0_24px_40px_rgba(0,0,0,0.42),0_0_24px_rgba(0,0,0,0.1)]">
        <header className="relative flex h-[33px] shrink-0 items-center justify-center border-b border-[#d6d6d6]">
          <div className="absolute left-2 flex gap-[9px]">
            <span className="size-4 rounded-full border border-[#e14a42] bg-[#fe5f57]" />
            <span className="size-4 rounded-full border border-[#e0a028] bg-[#febb2e]" />
            <span className="size-4 rounded-full border border-[#1eaa32] bg-[#27c840]" />
          </div>
          <h1 className="font-['Inter',sans-serif] text-[17px] font-semibold text-[#3c3c3c]">Gephi 0.10.1 - Untitled 2</h1>
        </header>

        <div className="flex h-[50px] shrink-0 bg-white">
          <div className="flex gap-[7px] border-b border-[#bdbdbd] pt-2 pr-3.5 pl-1.5">
            <button className={`${modeClass} w-[130px] bg-[#cbcbcb]`}><GlobeIcon />Overview</button>
            <button className={`${modeClass} w-[176px] bg-white`}><TableIcon />Data Laboratory</button>
            <button className={`${modeClass} w-[118px] bg-white`}><MonitorIcon />Preview</button>
          </div>
          <div className="flex pt-[15px]">
            <div className="flex items-center gap-[13px] border-b border-[#bdbdbd] bg-[#d2d2d2] pr-3 pl-[15px] text-[#333]">
              <button>Workspace 1</button>
              <button aria-label="Close Workspace 1"><CloseIcon /></button>
            </div>
            <div className="flex items-center gap-3 border border-b-0 border-[#bdbdbd] bg-[#f1f1f1] pr-2.5 pl-[13px]">
              <button>sample</button>
              <button aria-label="Close sample"><CloseIcon /></button>
            </div>
          </div>
          <div className="flex flex-1 items-center justify-end border-b border-[#bdbdbd] pt-3.5 pr-2"><ScrollArrows /></div>
        </div>

        <div className="flex flex-1 gap-[5px] px-1 pt-[6px] pb-[30px]">
          <div className="flex w-[441px] shrink-0 flex-col gap-[5px]">
            <EditPanel />
            <LayoutPanel />
          </div>
          <GraphPanel />
          <div className="flex w-[295px] shrink-0 flex-col gap-[5px]">
            <ContextPanel />
            <StatisticsPanel />
          </div>
        </div>
      </div>
    </div>
  );
}
